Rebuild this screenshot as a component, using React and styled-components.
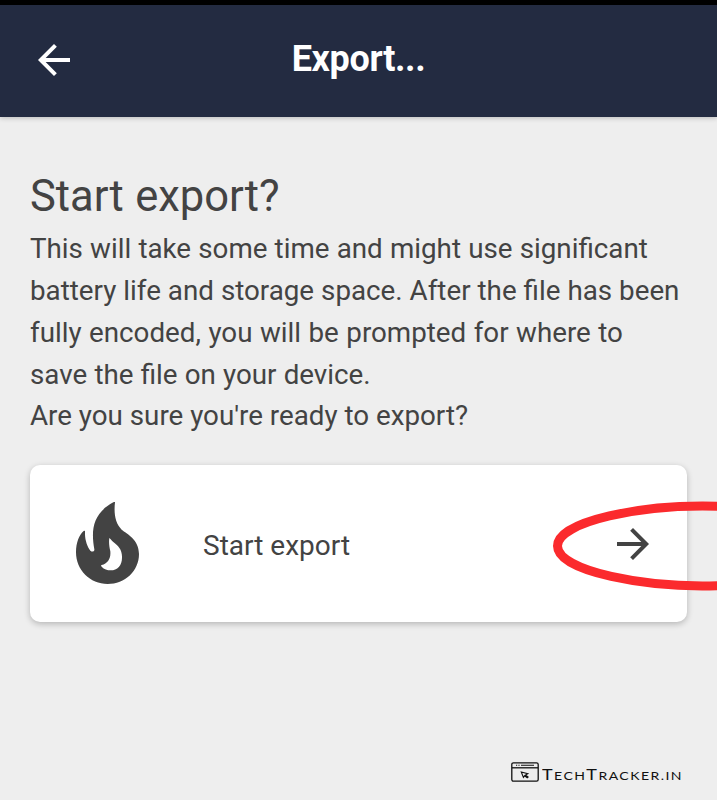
import React from 'react';
import styled, { createGlobalStyle } from 'styled-components';

const GlobalStyle = createGlobalStyle`
  * { box-sizing: border-box; }
  body {
    margin: 0;
    background: #eeeeee;
    color: #434343;
    font-family: Roboto, "Liberation Sans", sans-serif;
  }
`;

const Screen = styled.div`
  display: flex;
  flex-direction: column;
  width: 717px;
  height: 800px;
  overflow: hidden;
  background: #eeeeee;
`;

const StatusStrip = styled.div`
  flex: none;
  height: 5px;
  background: #000;
`;

const AppBar = styled.header`
  flex: none;
  display: grid;
  grid-template-columns: 48px 1fr 48px;
  align-items: center;
  height: 112px;
  padding: 0 30px 2px;
  background: #232b41;
  color: #fff;
  box-shadow: 0 1px 5px rgba(0, 0, 0, 0.22);
`;

const IconButton = styled.button`
  display: flex;
  padding: 0;
  border: 0;
  background: none;
  color: inherit;
`;

const Title = styled.h1`
  margin: 0;
  padding-bottom: 3px;
  text-align: center;
  font-size: 36px;
  line-height: 42px;
  font-weight: 700;
  letter-spacing: -0.35px;
`;

const Content = styled.main`
  flex: 1;
  padding: 52px 30px 0;
`;

const Heading = styled.h2`
  margin: 0;
  font-size: 43.5px;
  line-height: 56px;
  font-weight: 400;
  word-spacing: 0.6px;
`;

const Message = styled.p`
  margin: 3px 0 0;
  font-size: 27.75px;
  white-space: nowrap;
`;

const Line = styled.span`
  display: block;
  height: ${({ $height }) => $height || 42}px;
  line-height: 42px;
  word-spacing: ${({ $gap }) => $gap || 0}px;
`;

const ActionCard = styled.div`
  position: relative;
  display: flex;
  align-items: center;
  width: 657px;
  height: 157px;
  margin-top: 28px;
  padding: 0 30px 1px 46px;
  border-radius: 10px;
  background: #fff;
  box-shadow: 0 2px 6px rgba(0, 0, 0, 0.24);
`;

const ActionLabel = styled.span`
  flex: 1;
  margin-left: 64px;
  padding-top: 6px;
  font-size: 28px;
  line-height: 40px;
`;

const Highlight = styled.svg`
  position: absolute;
  left: 520px;
  top: 30px;
  pointer-events: none;
`;

const Footer = styled.footer`
  flex: none;
  display: flex;
  align-items: center;
  gap: 3px;
  height: 38px;
  padding: 0 0 18px 511px;
  color: #111;
`;

const Brand = styled.span`
  font-family: Lato, sans-serif;
  font-size: 15px;
  line-height: 20px;
  padding-top: 5px;
  white-space: nowrap;
  letter-spacing: 1.2px;
  transform: scaleX(1.2);
  transform-origin: left center;
`;

const SmallCaps = styled.span`
  font-size: 11.7px;
`;

const Arrow = ({ d }) => (
  <svg width="48" height="48" viewBox="0 0 24 24" fill="currentColor">
    <path d={d} />
  </svg>
);

const BACK = 'M20 11H7.83l5.59-5.59L12 4l-8 8 8 8 1.41-1.41L7.83 13H20z';
const FORWARD = 'M12 4.5l-1.41 1.41L16.17 11.5H4v2h12.17l-5.58 5.59L12 20.5l8-8z';

const Flame = () => (
  <svg width="63" height="82" viewBox="0 0 189 246" fill="#434343" fillRule="evenodd">
    <path d="M117 1C113 36 118 64 137 83C153 96 189 112 189 156C189 207 147 246 95 246C42 246 0 204 0 151C0 121 10 98 23 87C26 85 28 87 27 91C26 115 35 136 43 146C49 151 56 148 55 142C44 82 52 33 112 1C115 0 117 0 117 1ZM100 108C98 123 100 134 103 148C105 170 95 184 77 189C74 190 75 192 77 194C84 202 94 205 104 205C124 205 138 190 138 167C139 143 127 131 111 119C105 115 104 110 100 108Z" />
  </svg>
);

const BrowserIcon = () => (
  <svg width="28" height="20" viewBox="0 0 28 20" fill="none" stroke="#111" strokeWidth="1.3">
    <rect x="0.8" y="0.8" width="26.4" height="18.4" rx="1.6" />
    <path d="M1 5.8h26" />
    <path d="M5 3.3h1.2M7.4 3.3h1.2M10 3.3h13" strokeWidth="1.1" />
    <path d="M10.300 10l6.500 1.700-2.3 1.300 2.600 2-.9 .8-2.6-2-1.2 1.6z" strokeWidth="1.1" />
  </svg>
);

export default function App() {
  return (
    <>
      <GlobalStyle />
      <Screen>
        <StatusStrip />
        <AppBar>
          <IconButton aria-label="Back"><Arrow d={BACK} /></IconButton>
          <Title>Export...</Title>
        </AppBar>
        <Content>
          <Heading>Start export?</Heading>
          <Message>
            <Line $gap={0.3}>This will take some time and might use significant</Line>
            <Line $gap={0.1}>battery life and storage space. After the file has been</Line>
            <Line $gap={0.6}>fully encoded, you will be prompted for where to</Line>
            <Line $gap={0.3} $height={41}>save the file on your device.</Line>
            <Line>Are you sure you're ready to export?</Line>
          </Message>
          <ActionCard>
            <Flame />
            <ActionLabel>Start export</ActionLabel>
            <IconButton aria-label="Start"><Arrow d={FORWARD} /></IconButton>
            <Highlight width="167" height="105" viewBox="550 495 167 105" fill="none">
              <path d="M725 506.500C640 503 557.500 522 557.500 546C557.500 571 645 589 725 585.500" stroke="#fb2a2d" strokeWidth="9" />
            </Highlight>
          </ActionCard>
        </Content>
        <Footer>
          <BrowserIcon />
          <Brand>T<SmallCaps>ECH</SmallCaps>T<SmallCaps>RACKER.IN</SmallCaps></Brand>
        </Footer>
      </Screen>
    </>
  );
}
